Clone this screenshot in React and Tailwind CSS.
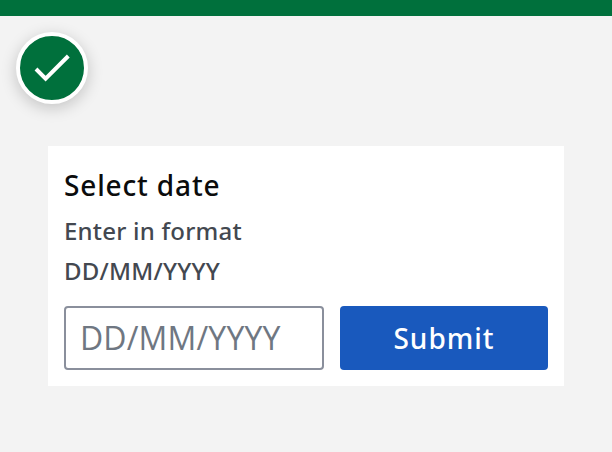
export default function App() {
  return (
    <div className="h-[452px] w-[612px] overflow-hidden border-t-[16px] border-[#00703c] bg-[#f3f3f3] font-['Noto_Sans','Open_Sans',sans-serif]">
      <div className="ml-4 mt-4 flex size-[72px] items-center justify-center rounded-full border-4 border-white bg-[#00703c] shadow-[0_4px_16px_rgba(0,0,0,0.2)]">
        <svg width="64" height="64" viewBox="0 0 64 64" fill="none" className="shrink-0">
          <path d="M16 33L25.6 42.6L48.3 20" stroke="white" strokeWidth="4" />
        </svg>
      </div>
      <form className="ml-12 mt-[42px] h-[240px] w-[516px] bg-white px-4 pt-[19px]" onSubmit={(e) => e.preventDefault()}>
        <label className="block text-[28px] font-medium leading-[40px] tracking-[0.85px] text-[#0b0c0c]">Select date</label>
        <p className="mt-[6px] w-[260px] text-[24px] font-medium leading-[40px] tracking-[0.22px] text-[#434850]">Enter in format DD/MM/YYYY</p>
        <div className="mt-[15px] flex gap-4">
          <input className="h-16 w-[260px] rounded-[4px] border-2 border-[#8a8f9c] px-[14px] pb-[2px] font-['Open_Sans',sans-serif] text-[32px] tracking-[0.15px] placeholder:text-[#6f7782]" placeholder="DD/MM/YYYY" />
          <button className="h-16 w-52 rounded-[4px] bg-[#1959bd] pb-px text-[28px] font-medium tracking-[1px] text-white">Submit</button>
        </div>
      </form>
    </div>
  );
}
